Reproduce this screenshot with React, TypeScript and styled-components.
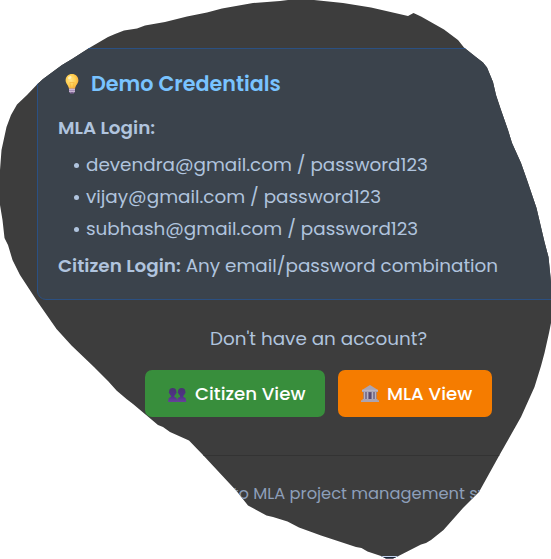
import React from "react";
import styled, { createGlobalStyle } from "styled-components";

const GlobalStyle = createGlobalStyle`
  html, body { margin: 0; padding: 0; background: #fff; overflow: hidden; }
  * { box-sizing: border-box; }
`;

const outline: number[][] = [
  [0, 170], [1.5, 150], [6.5, 127], [11, 115], [17, 104.5], [27, 95], [37, 84.5], [43, 79], [62, 65], [72, 59],
  [90, 47.5], [108, 37], [115, 34], [124, 30.5], [137, 28.5], [145, 25.5], [165, 22], [187, 16.5], [207, 12.5],
  [222, 8.5], [253, 3], [280, 1], [288, 0], [314, 0], [343, 3], [371, 7.5], [408, 16], [413.5, 13], [421, 16.5],
  [444, 29.5], [458, 40], [464, 47.5], [474, 55.5], [483, 62.5], [487, 67.5], [493, 82], [496, 95], [501, 110],
  [508, 130], [512, 143], [521, 163], [527, 180], [536.5, 208], [544.5, 242], [548.5, 257], [550.5, 277],
  [551, 283], [551, 323], [549, 333], [544.5, 353], [541, 366], [534.5, 387], [521, 417], [499.5, 455],
  [479, 492], [463, 508], [443.5, 530], [431, 540], [426, 543], [421, 544.5], [397.5, 556.5], [393, 558.5],
  [386, 558.5], [381, 556], [367.5, 551.5], [361.5, 548], [356, 547], [321, 535.5], [299, 527.5], [287.5, 521.5],
  [273, 517], [266.5, 515.5], [248, 505.5], [236.5, 491], [203, 455], [189, 440.5], [170, 432], [163, 427],
  [158, 425], [133, 404], [126.5, 399], [116.5, 390.5], [108, 381], [94, 367], [71.5, 345.5], [56.5, 329],
  [37, 301], [20, 275], [12.5, 260], [8, 245], [4.5, 238], [2.5, 220], [0, 205],
];

const Page = styled.main`
  width: 551px;
  height: 559px;
  overflow: hidden;
  display: flex;
  flex-direction: column;
  background: #3d3d3d;
  color: #b0c4de;
  font: 400 18.36px/32px Poppins, Inter, sans-serif;
  white-space: nowrap;
  clip-path: polygon(${outline.map(([x, y]) => `${x}px ${y}px`).join(", ")});
`;

const Content = styled.div`
  width: 562px;
  height: 556px;
  flex: none;
  margin-left: 37px;
  padding-top: 48px;
`;

const BottomEdge = styled.div`
  height: 3px;
  border-top: 1px solid #c3d2ee;
  background: #182238;
`;

const Card = styled.section`
  height: 252px;
  padding: 20px;
  border: 1px solid #2b5082;
  border-radius: 9px;
  background: #3b434c;
`;

const Title = styled.h3`
  display: flex;
  align-items: center;
  margin: 0 0 13px;
  height: 30px;
  color: #79c3ff;
  font-size: 20.7px;
  font-weight: 600;

  svg { margin: 0 11px 0 6px; }
`;

const Line = styled.div`
  height: 32px;
`;

const List = styled.ul`
  list-style: none;
  margin: 5px 0;
  padding: 0 0 0 16px;
`;

const Item = styled.li`
  display: flex;
  align-items: center;
  height: 32px;

  &::before {
    content: "";
    width: 5px;
    height: 5px;
    margin-right: 7px;
    border-radius: 50%;
    background: currentColor;
  }
`;

const Strong = styled.strong`
  font-weight: 600;
`;

const Prompt = styled.p`
  margin: 23px 0 15px;
  padding-left: 1px;
  text-align: center;
`;

const Actions = styled.div`
  display: flex;
  justify-content: center;
  gap: 13px;
`;

const Button = styled.button<{ $color: string; $width: number }>`
  display: flex;
  align-items: center;
  width: ${(p) => p.$width}px;
  height: 47px;
  padding: 0 0 0 23px;
  border: 0;
  border-radius: 7px;
  background: ${(p) => p.$color};
  color: #fff;
  font: 500 18.2px/32px Poppins, Inter, sans-serif;

  svg { flex: none; margin-right: 8.5px; }
`;

const Footer = styled.footer`
  margin-top: 38px;
  padding: 22px 0 0 2px;
  border-top: 1px solid #333;
  text-align: center;
  color: #8d9fb9;
  font-size: 16.3px;
`;

const Bulb = () => (
  <svg width="16" height="22" viewBox="0 0 16 22">
    <defs>
      <radialGradient id="glow" cx=".4" cy=".4" r=".65">
        <stop offset="0" stopColor="#ffe58a" />
        <stop offset=".6" stopColor="#ffcd4d" />
        <stop offset="1" stopColor="#f5a83b" />
      </radialGradient>
    </defs>
    <path d="M8 1C4.300 1 1.600 3.700 1.600 7.200c0 3.600 2.900 4.600 3.400 8.800h6c.5-4.200 3.400-5.200 3.400-8.800C14.400 3.700 11.700 1 8 1Z" fill="url(#glow)" />
    <path d="M5.800 9.500 7 15.500M10.200 9.500 9 15.500M5.800 9.500h4.400" stroke="#f5b13d" strokeWidth=".7" fill="none" />
    <ellipse cx="5.800" cy="4.600" rx="1.900" ry="1.300" fill="#fff2bd" transform="rotate(-35 5.800 4.600)" />
    <path d="M5 15.500h6v3.200L9.500 20.500h-3L5 18.700Z" fill="#a58bb8" />
    <path d="M5 16.500h6M5 18.400h6" stroke="#d5c5dd" strokeWidth=".8" />
    <path d="M6.500 20h3" stroke="#59436b" strokeWidth="1.200" />
  </svg>
);

const People = () => (
  <svg width="19" height="19" viewBox="0 0 19 19">
    <defs>
      <linearGradient id="bust" x1="0" y1="0" x2="0" y2="1">
        <stop offset="0" stopColor="#48366f" />
        <stop offset=".6" stopColor="#50318a" />
        <stop offset="1" stopColor="#68439a" />
      </linearGradient>
    </defs>
    {[-0.8, 8.2].map((x) => (
      <path
        key={x}
        transform={`translate(${x} 4) scale(1 .97)`}
        d="M5.500 0C3 0 1.800 1.500 1.900 3.600c-.6.300-.3 2 .5 2.200.3 1 .9 1.700 1.500 2.200v1.300C1.800 10 1 10.500 1 14.500h9c0-4-.8-4.500-2.900-5.200V8c.6-.5 1.200-1.200 1.500-2.200.8-.2 1.100-1.900.5-2.200C9.200 1.500 8 0 5.500 0Z"
        fill="url(#bust)"
      />
    ))}
  </svg>
);

const Building = () => (
  <svg width="18" height="19" viewBox="0 0 18 19">
    <path d="M1 6 9 1l8 5v2H1Z" fill="#aaa5b5" />
    <path d="M1 6.300h16" stroke="#c3bdca" strokeWidth=".8" />
    <path d="M2.500 8h13v7.500h-13Z" fill="#625879" />
    <path d="M3.500 8v8M6.500 8v8M11.500 8v8M14.500 8v8" stroke="#b6b0bf" strokeWidth="1.700" />
    <path d="M8 9h2v7H8Z" fill="#59486f" />
    <path d="M1.500 15h15v1.200H18V18H0v-1.800h1.500Z" fill="#aaa4b3" />
  </svg>
);

const accounts = [
  "devendra@gmail.com / password123",
  "vijay@gmail.com / password123",
  "subhash@gmail.com / password123",
];

export default function App() {
  return (
    <>
      <GlobalStyle />
      <Page>
        <Content>
          <Card>
            <Title><Bulb />Demo Credentials</Title>
            <Line><Strong>MLA Login:</Strong></Line>
            <List>
              {accounts.map((text) => (
                <Item key={text}>{text}</Item>
              ))}
            </List>
            <Line>
              <Strong>Citizen Login:</Strong> Any email/password combination
            </Line>
          </Card>
          <Prompt>Don't have an account?</Prompt>
          <Actions>
            <Button $color="#388e3c" $width={180}><People />Citizen View</Button>
            <Button $color="#f57c00" $width={154}><Building />MLA View</Button>
          </Actions>
          <Footer>Secure access to MLA project management system</Footer>
        </Content>
        <BottomEdge />
      </Page>
    </>
  );
}
